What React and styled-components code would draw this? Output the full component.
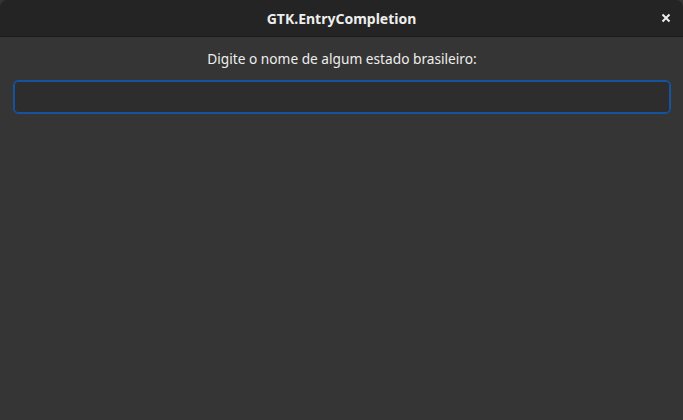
import React from 'react';
import styled, { createGlobalStyle } from 'styled-components';

const GlobalStyle = createGlobalStyle`
  html, body {
    margin: 0;
    padding: 0;
    background: #353535;
  }
  body {
    font-family: "Noto Sans", "Open Sans", sans-serif;
  }
`;

const Window = styled.div`
  width: 683px;
  height: 420px;
  display: flex;
  flex-direction: column;
  background: #353535;
  overflow: hidden;
`;

const TitleBar = styled.div`
  height: 36px;
  flex-shrink: 0;
  display: flex;
  align-items: center;
  justify-content: center;
  position: relative;
  background: #242424;
  border-radius: 7px 7px 0 0;
  border-bottom: 1px solid #1b1b1b;
`;

const Title = styled.div`
  color: #eeeeec;
  font-size: 14px;
  font-weight: 700;
`;

const CloseButton = styled.div`
  position: absolute;
  right: 12px;
  top: 13px;
  width: 10px;
  height: 10px;
  display: flex;
  align-items: center;
  justify-content: center;
`;

const Content = styled.div`
  flex: 1;
  display: flex;
  flex-direction: column;
  align-items: stretch;
  padding: 12px 12px 0 13px;
  gap: 11px;
`;

const Label = styled.div`
  color: #eeeeec;
  font-size: 13.7px;
  text-align: center;
  line-height: 20px;
`;

const Entry = styled.input`
  height: 34px;
  box-sizing: border-box;
  background: #2d2d2d;
  border: 1px solid #15539e;
  border-radius: 5px;
  box-shadow: inset 0 0 0 1px #15539e;
  outline: none;
  color: #eeeeec;
  font: inherit;
  padding: 0 8px;
`;

const App = () => (
  <Window>
    <GlobalStyle />
    <TitleBar>
      <Title>GTK.EntryCompletion</Title>
      <CloseButton>
        <svg width="10" height="10" viewBox="0 0 10 10">
          <path d="M1.5 1.5 L8.5 8.5 M8.5 1.5 L1.5 8.5" stroke="#eeeeec" strokeWidth="2" />
        </svg>
      </CloseButton>
    </TitleBar>
    <Content>
      <Label>Digite o nome de algum estado brasileiro:</Label>
      <Entry />
    </Content>
  </Window>
);

export default App;
